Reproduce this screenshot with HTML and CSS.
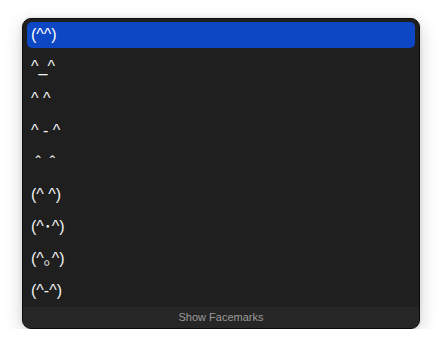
FILE: index.html
```html
<!DOCTYPE html>
<html lang="en">
<head>
    <meta charset="UTF-8">
    <title>Facemarks</title>
    <link rel="stylesheet" href="styles.css">
</head>
<body>
    <div class="panel">
        <ul class="list">
            <li class="item selected">(^^)</li>
            <li class="item">^_^</li>
            <li class="item">^ ^</li>
            <li class="item">^ - ^</li>
            <li class="item">&nbsp;ˆ&nbsp;&nbsp;ˆ</li>
            <li class="item">(^ ^)</li>
            <li class="item">(^･^)</li>
            <li class="item">(^｡^)</li>
            <li class="item">(^-^)</li>
        </ul>
        <div class="footer">Show Facemarks</div>
    </div>
</body>
</html>
```

FILE: styles.css
```css
body {
    margin: 0;
    background-color: #ffffff;
    font-family: "Liberation Sans", "Noto Sans CJK JP", sans-serif;
}

.panel {
    margin: 18px 0 0 22px;
    width: 396px;
    height: 309px;
    background-color: #1f1f1f;
    border: 1px solid #0c0c0c;
    border-radius: 9px;
    box-shadow: 0 6px 18px rgba(0, 0, 0, 0.18), 0 0 4px rgba(0, 0, 0, 0.1);
    display: flex;
    flex-direction: column;
    overflow: hidden;
}

.list {
    list-style: none;
    margin: 0;
    padding: 3px 0;
    flex: 1;
    overflow: hidden;
}

.item {
    height: 26px;
    margin: 0 4px 6px;
    padding: 0 4px;
    line-height: 26px;
    font-size: 16px;
    color: #f2f2f2;
    border-radius: 5px;
    white-space: pre;
}

.item:last-child {
    margin-bottom: 0;
}

.item.selected {
    background-color: #0d47c4;
    color: #ffffff;
}

.footer {
    flex-shrink: 0;
    height: 21px;
    line-height: 21px;
    background-color: #262626;
    color: #9b9b9b;
    font-size: 11px;
    text-align: center;
}
```
